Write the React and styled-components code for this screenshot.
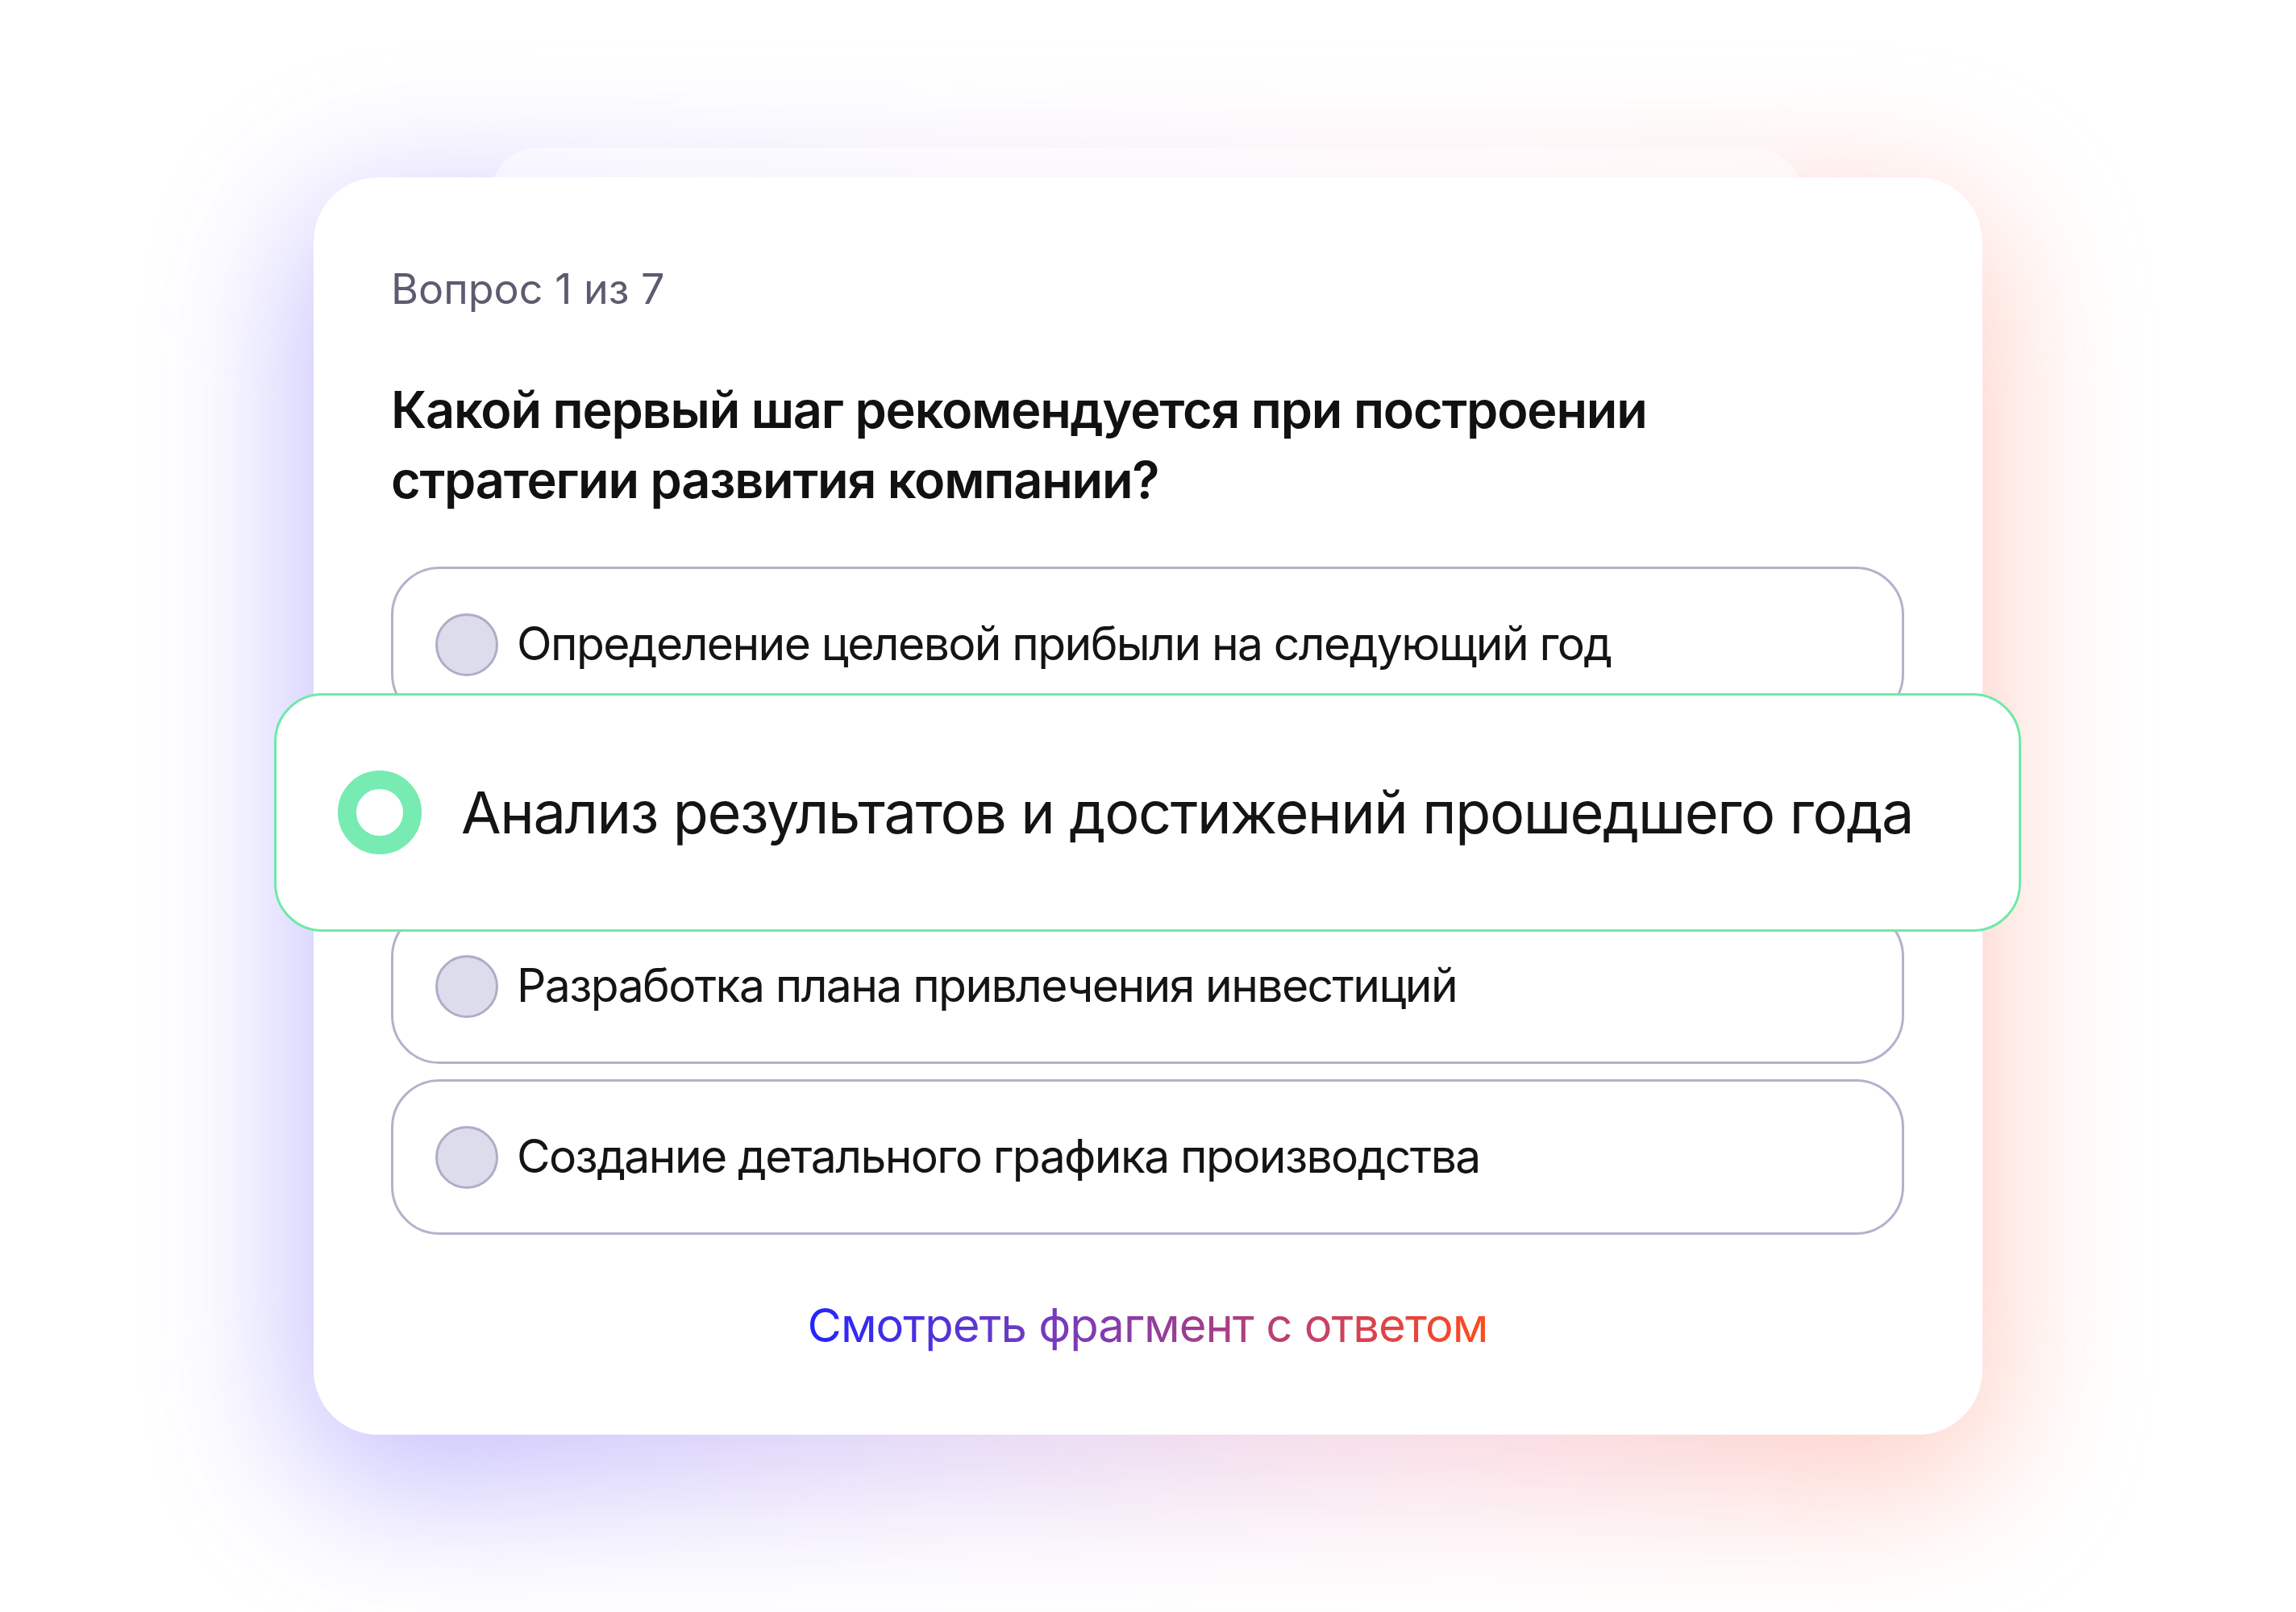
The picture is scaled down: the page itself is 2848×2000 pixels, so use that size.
import React from "react";
import styled, { createGlobalStyle } from "styled-components";

const Global = createGlobalStyle`
  html, body { margin: 0; padding: 0; background: #ffffff; }
  body { font-family: Inter, "Noto Sans", sans-serif; -webkit-font-smoothing: antialiased; }
`;

const Stage = styled.div`
  width: 2848px;
  height: 2000px;
  display: flex;
  justify-content: center;
  align-items: flex-start;
  padding-top: 220px;
  box-sizing: border-box;
  overflow: hidden;
`;

const CardStack = styled.div`
  position: relative;
  width: 2070px;
`;

const Glow = styled.div`
  position: absolute;
  top: 30px;
  bottom: -70px;
  left: -20px;
  right: -20px;
  border-radius: 120px;
  background: linear-gradient(90deg, #9890ff 0%, #c8b4f2 35%, #f2bcd0 65%, #ffad98 100%);
  filter: blur(90px);
  opacity: 0.6;
  z-index: 0;
`;

const BackCard = styled.div`
  position: absolute;
  top: -37px;
  left: 219px;
  right: 224px;
  height: 240px;
  border-radius: 60px;
  background: rgba(255, 255, 255, 0.5);
  z-index: 1;
`;

const Card = styled.div`
  position: relative;
  z-index: 2;
  background: #ffffff;
  border-radius: 80px;
  padding: 110px 97px 101px 96px;
  display: flex;
  flex-direction: column;
`;

const Counter = styled.div`
  font-size: 52px;
  line-height: 58px;
  font-weight: 400;
  color: #5c5b6f;
  letter-spacing: 0;
`;

const Question = styled.h1`
  margin: 77px 0 0;
  font-size: 63px;
  line-height: 87px;
  font-weight: 600;
  color: #111114;
  letter-spacing: -1.2px;
`;

const Options = styled.div`
  margin-top: 64px;
  display: flex;
  flex-direction: column;
  gap: 19px;
`;

const Option = styled.div`
  position: relative;
  box-sizing: border-box;
  height: ${(p) => (p.$selected ? "296px" : "193px")};
  margin: ${(p) => (p.$selected ? "-55px -145px -48px" : "0")};
  z-index: ${(p) => (p.$selected ? 3 : 1)};
  border: 3px solid ${(p) => (p.$selected ? "#6fe9a8" : "#b3b2cb")};
  border-radius: 60px;
  background: #ffffff;
  display: flex;
  align-items: center;
  gap: ${(p) => (p.$selected ? "49px" : "23px")};
  padding-left: ${(p) => (p.$selected ? "76px" : "52px")};
`;

const Radio = styled.span`
  flex: none;
  box-sizing: border-box;
  width: ${(p) => (p.$selected ? "104px" : "78px")};
  height: ${(p) => (p.$selected ? "104px" : "78px")};
  border-radius: 50%;
  background: ${(p) => (p.$selected ? "#ffffff" : "#dddcec")};
  border: ${(p) => (p.$selected ? "23px solid #77ebb1" : "3px solid #aeadc8")};
`;

const OptionText = styled.span`
  font-size: ${(p) => (p.$selected ? "72px" : "57px")};
  line-height: 1.2;
  font-weight: 400;
  color: #141416;
  letter-spacing: ${(p) => (p.$selected ? "-1.4px" : "-1.6px")};
  white-space: nowrap;
`;

const LinkRow = styled.div`
  margin-top: 77px;
  display: flex;
  justify-content: center;
`;

const GradientLink = styled.a`
  display: inline-block;
  font-size: 58px;
  line-height: 70px;
  font-weight: 400;
  letter-spacing: -1px;
  text-decoration: none;
  background: linear-gradient(90deg, #2424ff 0%, #6a3ac8 30%, #9a3d96 55%, #d24257 80%, #ff4a1c 100%);
  -webkit-background-clip: text;
  background-clip: text;
  color: transparent;
  cursor: pointer;
`;

const options = [
  "Определение целевой прибыли на следующий год",
  "Анализ результатов и достижений прошедшего года",
  "Разработка плана привлечения инвестиций",
  "Создание детального графика производства",
];

export default function App() {
  return (
    <>
      <Global />
      <Stage>
        <CardStack>
          <Glow />
          <BackCard />
          <Card>
            <Counter>Вопрос 1 из 7</Counter>
            <Question>
              Какой первый шаг рекомендуется при построении
              <br />
              стратегии развития компании?
            </Question>
            <Options>
              {options.map((text, i) => {
                const selected = i === 1;
                return (
                  <Option key={text} $selected={selected}>
                    <Radio $selected={selected} />
                    <OptionText $selected={selected}>{text}</OptionText>
                  </Option>
                );
              })}
            </Options>
            <LinkRow>
              <GradientLink>Смотреть фрагмент с ответом</GradientLink>
            </LinkRow>
          </Card>
        </CardStack>
      </Stage>
    </>
  );
}
